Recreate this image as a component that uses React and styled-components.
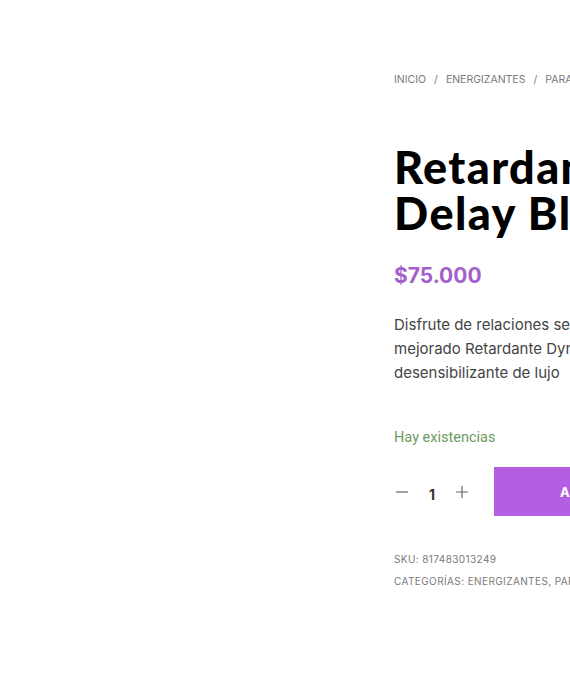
import React from 'react';
import styled, { createGlobalStyle } from 'styled-components';

const GlobalStyle = createGlobalStyle`
  html, body {
    margin: 0;
    padding: 0;
    background: #fff;
    overflow: hidden;
  }
  body {
    width: 570px;
    height: 692px;
    font-family: Inter, "Liberation Sans", sans-serif;
  }
`;

const Page = styled.div`
  display: grid;
  grid-template-columns: 394px 620px;
  width: 1014px;
  padding-top: 71px;
`;

const Gallery = styled.div``;

const Summary = styled.div`
  display: flex;
  flex-direction: column;
`;

const Crumbs = styled.nav`
  font-size: 10.5px;
  letter-spacing: 0;
  text-transform: uppercase;
  color: #7a7a7a;
  line-height: 18px;
  white-space: nowrap;
  & span {
    margin: 0 8px;
  }
`;

const Title = styled.h1`
  margin: 55px 0 0;
  font-family: Lato, sans-serif;
  font-weight: 900;
  font-size: 45px;
  line-height: 46px;
  color: #000;
  letter-spacing: 1.4px;
  white-space: nowrap;
`;

const Price = styled.p`
  margin: 26px 0 0;
  font-weight: 700;
  font-size: 21px;
  line-height: 28px;
  color: #a35fcc;
`;

const Description = styled.p`
  margin: 23px 0 0;
  font-size: 15px;
  line-height: 24px;
  color: #444;
  white-space: nowrap;
`;

const Stock = styled.p`
  margin: 42px 0 0;
  font-family: Roboto, sans-serif;
  font-size: 14.5px;
  line-height: 22px;
  color: #6f9a5f;
`;

const CartRow = styled.form`
  display: flex;
  align-items: center;
  margin-top: 18px;
  gap: 24px;
`;

const Qty = styled.div`
  display: flex;
  align-items: center;
  width: 76px;
`;

const QtyButton = styled.button`
  border: 0;
  background: none;
  padding: 0;
  width: 16px;
  height: 16px;
  display: flex;
  align-items: center;
  justify-content: center;
  color: #666;
  cursor: pointer;
`;

const QtyValue = styled.span`
  flex: 1;
  text-align: center;
  font-weight: 700;
  font-size: 14px;
  color: #333;
  padding-top: 6px;
`;

const AddButton = styled.button`
  border: 0;
  height: 49px;
  width: 220px;
  flex-shrink: 0;
  background: #b45fe3;
  color: #fff;
  font-family: Inter, sans-serif;
  font-weight: 700;
  font-size: 13px;
  letter-spacing: 1px;
  text-transform: uppercase;
  text-align: left;
  white-space: nowrap;
  padding-left: 66px;
`;

const Meta = styled.div`
  margin-top: 35px;
  display: flex;
  flex-direction: column;
  gap: 6px;
  font-size: 10px;
  letter-spacing: 0.4px;
  text-transform: uppercase;
  color: #7a7a7a;
  line-height: 16px;
  white-space: nowrap;
`;

const Minus = () => (
  <svg width="14" height="14" viewBox="0 0 14 14">
    <path d="M1 7h12" stroke="#666" strokeWidth="1.2" />
  </svg>
);

const Plus = () => (
  <svg width="14" height="14" viewBox="0 0 14 14">
    <path d="M1 7h12M7 1v12" stroke="#666" strokeWidth="1.2" />
  </svg>
);

export default function App() {
  return (
    <>
      <GlobalStyle />
      <Page>
        <Gallery />
        <Summary>
          <Crumbs>
            Inicio<span>/</span>Energizantes<span>/</span>Para hombres
          </Crumbs>
          <Title>
            Retardante Dynamo
            <br />
            Delay Black
          </Title>
          <Price>$75.000</Price>
          <Description>
            Disfrute de relaciones sexuales más duraderas con el
            <br />
            mejorado Retardante Dynamo Delay, un spray
            <br />
            desensibilizante de lujo
          </Description>
          <Stock>Hay existencias</Stock>
          <CartRow>
            <Qty>
              <QtyButton type="button"><Minus /></QtyButton>
              <QtyValue>1</QtyValue>
              <QtyButton type="button"><Plus /></QtyButton>
            </Qty>
            <AddButton type="button">Añadir al carrito</AddButton>
          </CartRow>
          <Meta>
            <span>SKU: 817483013249</span>
            <span>Categorías: Energizantes, Para hombres</span>
          </Meta>
        </Summary>
      </Page>
    </>
  );
}
